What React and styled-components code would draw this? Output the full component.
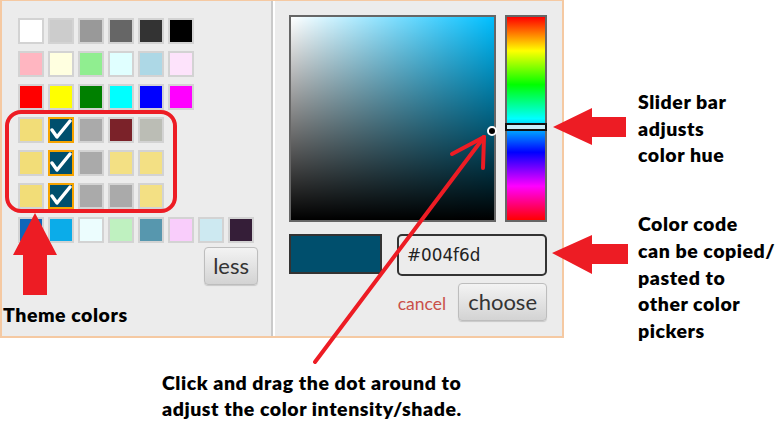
import React from "react"
import styled, { createGlobalStyle } from "styled-components"

const Global = createGlobalStyle`
  body {
    margin: 0;
    background: #fff;
  }
`

const RED = "#ed1c24"

const Canvas = styled.div`
  position: relative;
  width: 782px;
  height: 424px;
  overflow: hidden;
  font-family: Lato, "Liberation Sans", sans-serif;
`

const TopRow = styled.div`
  display: flex;
  align-items: flex-start;
`

const Frame = styled.div`
  box-sizing: border-box;
  width: 564px;
  height: 338px;
  display: flex;
  border: 2px solid #f5c9a2;
  border-top-width: 1px;
  background: #ececec;
`

const LeftPanel = styled.div`
  width: 269px;
  display: flex;
  flex-direction: column;
  padding-top: 17px;
`

const Swatches = styled.div`
  display: flex;
  flex-direction: column;
  gap: 7px;
  padding-left: 16px;
`

const SwatchRow = styled.div`
  display: flex;
  gap: 4px;
  margin-top: ${({ $extra }) => ($extra ? "1px" : "0")};
`

const Swatch = styled.div`
  box-sizing: border-box;
  width: 26px;
  height: 26px;
  border: 2px solid ${({ $checked }) => ($checked ? "#f6a300" : "#d3d3d3")};
  background: ${({ $color }) => $color};
  display: flex;
  align-items: center;
  justify-content: center;
`

const ButtonRow = styled.div`
  width: 240px;
  padding-left: 16px;
  margin-top: 4px;
  display: flex;
  justify-content: flex-end;
`

const GreyButton = styled.button`
  box-sizing: border-box;
  height: 38px;
  padding: 0 ${({ $pad }) => $pad}px;
  border: 1px solid #bdbdbd;
  border-radius: 4px;
  background: linear-gradient(to bottom, #f3f3f3, #d3d3d3);
  box-shadow: 0 1px 1px rgba(0, 0, 0, 0.15);
  font-family: Lato, "Liberation Sans", sans-serif;
  font-size: 22px;
  color: #333;
  line-height: 1;
`

const Note = styled.div`
  font-family: Lato, "Liberation Sans", sans-serif;
  font-weight: 800;
  font-size: 19.5px;
  letter-spacing: 0.55px;
  line-height: 26.7px;
  color: #000;
  white-space: nowrap;
`

const ThemeLabel = styled(Note)`
  margin-top: 17px;
  padding-left: 1px;
`

const Divider = styled.div`
  width: 2px;
  border-left: 2px solid #cacaca;
  background: #fff;
`

const RightPanel = styled.div`
  flex: 1;
  padding: 14px 0 0 14px;
  display: flex;
  flex-direction: column;
`

const PickerRow = styled.div`
  display: flex;
  gap: 9px;
`

const ShadeBox = styled.div`
  position: relative;
  box-sizing: border-box;
  width: 207px;
  height: 207px;
  border: 2px solid #666;
  background: linear-gradient(to top, #000, rgba(0, 0, 0, 0)),
    linear-gradient(to right, #fff, rgba(255, 255, 255, 0)), #00bfff;
`

const Dot = styled.div`
  position: absolute;
  left: 196px;
  top: 109px;
  width: 6px;
  height: 6px;
  border-radius: 50%;
  background: #000;
  border: 2px solid #fff;
`

const HueBar = styled.div`
  position: relative;
  box-sizing: border-box;
  width: 42px;
  height: 207px;
  border: 2px solid #666;
  background: linear-gradient(
    to bottom,
    #f00 0%,
    #ff0 16.67%,
    #0f0 33.33%,
    #0ff 50%,
    #00f 66.67%,
    #f0f 83.33%,
    #f00 100%
  );
`

const HueHandle = styled.div`
  position: absolute;
  left: -2px;
  right: -2px;
  top: 106px;
  height: 8px;
  box-sizing: border-box;
  border: 2px solid #111;
  background: #c8eefa;
`

const ValueRow = styled.div`
  display: flex;
  gap: 15px;
  margin-top: 12px;
`

const Preview = styled.div`
  box-sizing: border-box;
  width: 93px;
  height: 40px;
  border: 2px solid #333;
  background: #004f6d;
`

const HexField = styled.div`
  box-sizing: border-box;
  width: 150px;
  height: 42px;
  border: 2px solid #333;
  border-radius: 5px;
  padding-left: 8px;
  display: flex;
  align-items: center;
  font-family: "DejaVu Sans", sans-serif;
  font-size: 16.8px;
  color: #222;
`

const ActionRow = styled.div`
  width: 258px;
  margin-top: 7px;
  display: flex;
  justify-content: flex-end;
  align-items: center;
  gap: 12px;
`

const Cancel = styled.span`
  font-size: 17.5px;
  color: #c9504a;
  padding-top: 2px;
`

const Callouts = styled.div`
  margin-left: 74px;
  padding-top: 89px;
  display: flex;
  flex-direction: column;
  gap: 42px;
`

const Caption = styled(Note)`
  margin: 25px 0 0 162px;
`

const Overlay = styled.svg`
  position: absolute;
  left: 0;
  top: 0;
  pointer-events: none;
`

const rows = [
  ["#ffffff", "#cccccc", "#999999", "#666666", "#333333", "#000000"],
  ["#ffb6c1", "#ffffe0", "#90ee90", "#e0ffff", "#add8e6", "#fde3fb"],
  ["#ff0000", "#ffff00", "#008000", "#00ffff", "#0000ff", "#ff00ff"],
  ["#f2dd78", "check", "#aaaaaa", "#7b2229", "#bbbdb5"],
  ["#f2dd78", "check", "#aaaaaa", "#f3e084", "#f3e084"],
  ["#f2dd78", "check", "#aaaaaa", "#aaaaaa", "#f3e084"],
  ["#0e66b9", "#0bace9", "#ecfdfe", "#bff1c0", "#5797ae", "#f9cdfb", "#cde9f1", "#351e38"],
]

const Check = () => (
  <svg width="22" height="22" viewBox="0 0 22 22">
    <path
      d="M2 11 L7 18 L20 2"
      fill="none"
      stroke="#fff"
      strokeWidth="3.4"
      strokeLinecap="round"
      strokeLinejoin="round"
    />
  </svg>
)

export default function App() {
  return (
    <Canvas>
      <Global />
      <TopRow>
        <Frame>
          <LeftPanel>
            <Swatches>
              {rows.map((row, i) => (
                <SwatchRow key={i} $extra={i === 6}>
                  {row.map((c, j) =>
                    c === "check" ? (
                      <Swatch key={j} $color="#004f6d" $checked>
                        <Check />
                      </Swatch>
                    ) : (
                      <Swatch key={j} $color={c} />
                    )
                  )}
                </SwatchRow>
              ))}
            </Swatches>
            <ButtonRow>
              <GreyButton $pad={8}>less</GreyButton>
            </ButtonRow>
            <ThemeLabel>Theme colors</ThemeLabel>
          </LeftPanel>
          <Divider />
          <RightPanel>
            <PickerRow>
              <ShadeBox>
                <Dot />
              </ShadeBox>
              <HueBar>
                <HueHandle />
              </HueBar>
            </PickerRow>
            <ValueRow>
              <Preview />
              <HexField>#004f6d</HexField>
            </ValueRow>
            <ActionRow>
              <Cancel>cancel</Cancel>
              <GreyButton $pad={9}>choose</GreyButton>
            </ActionRow>
          </RightPanel>
        </Frame>
        <Callouts>
          <Note>
            Slider bar
            <br />
            adjusts
            <br />
            color hue
          </Note>
          <Note>
            Color code
            <br />
            can be copied/
            <br />
            pasted to
            <br />
            other color
            <br />
            pickers
          </Note>
        </Callouts>
      </TopRow>
      <Caption>
        Click and drag the dot around to
        <br />
        adjust the color intensity/shade.
      </Caption>

      <Overlay width="782" height="424" viewBox="0 0 782 424">
        <rect x="7" y="112" width="168" height="99" rx="14" fill="none" stroke={RED} strokeWidth="4" />
        <polygon points="35,213 13,255 23,255 23,295 47,295 47,255 57,255" fill={RED} />
        <polygon points="553,127 592,108 592,117 626,117 626,137 592,137 592,145" fill={RED} />
        <polygon points="552,253 592,235 592,244 628,244 628,264 592,264 592,274" fill={RED} />
        <g stroke={RED} strokeWidth="4" strokeLinecap="round" fill="none">
          <line x1="315" y1="362" x2="484" y2="137" />
          <line x1="484" y1="137" x2="452" y2="154" />
          <line x1="484" y1="137" x2="483" y2="168" />
        </g>
      </Overlay>
    </Canvas>
  )
}
